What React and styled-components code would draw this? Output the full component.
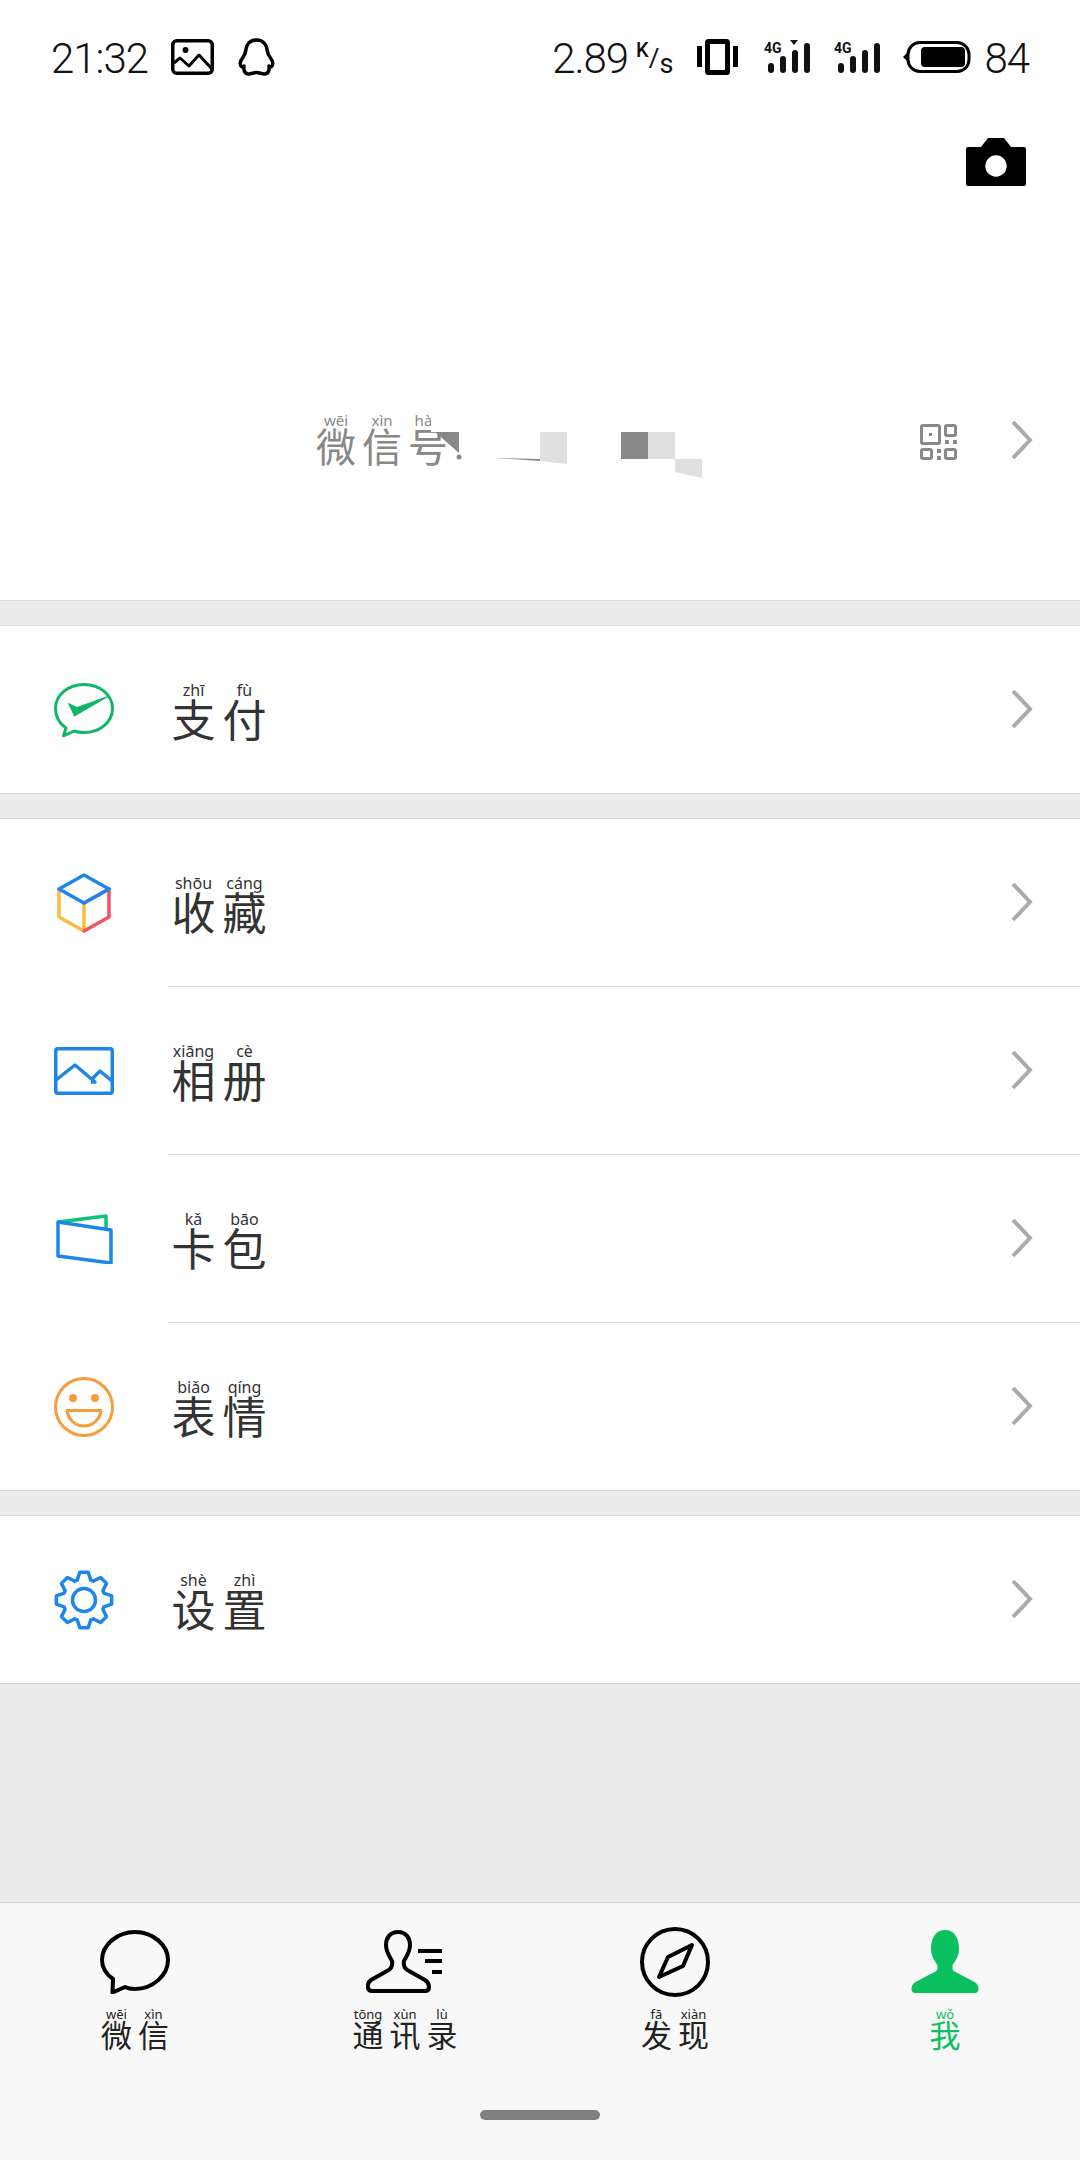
import React from 'react';
import styled, { createGlobalStyle } from 'styled-components';

const GlobalStyle = createGlobalStyle`
  html, body {
    margin: 0;
    padding: 0;
    background: #ececec;
    font-family: "Noto Sans", "Noto Sans CJK SC", sans-serif;
  }
`;

const Page = styled.div`
  width: 1080px;
  height: 2160px;
  display: flex;
  flex-direction: column;
  background: #ececec;
  overflow: hidden;
`;

const Header = styled.header`
  height: 600px;
  flex: none;
  background: #fff;
  border-bottom: 1px solid #d8d8d8;
  display: flex;
  flex-direction: column;
`;

const StatusBar = styled.div`
  height: 38px;
  margin-top: 38px;
  padding: 0 51px;
  display: flex;
  align-items: center;
  color: #111;
`;

const StatusText = styled.span`
  font-family: Roboto, sans-serif;
  font-weight: 300;
  font-size: 42px;
  line-height: 38px;
  padding-top: 4px;
  letter-spacing: -1px;
  margin-left: ${(p) => p.$ml ?? 0}px;
`;

const StatusIcon = styled.svg`
  flex: none;
  display: block;
  margin-left: ${(p) => p.$ml ?? 0}px;
`;

const Spacer = styled.div`
  flex: 1;
`;

const SpeedUnit = styled.span`
  display: inline-flex;
  height: 38px;
  margin-left: 8px;
  font-family: Roboto, sans-serif;
  color: #111;
`;

const UnitPart = styled.span`
  font-size: ${(p) => p.$size}px;
  font-weight: ${(p) => p.$weight};
  line-height: ${(p) => p.$line}px;
  margin-top: ${(p) => p.$top}px;
`;

const CameraRow = styled.div`
  display: flex;
  justify-content: flex-end;
  padding: 62px 54px 0 0;
`;

const ProfileRow = styled.div`
  position: relative;
  display: flex;
  align-items: flex-start;
  margin-top: 234px;
  padding: 0 47px 0 313px;
`;

const Mosaic = styled.svg`
  position: absolute;
  left: 430px;
  top: -10px;
`;

const Word = styled.div`
  display: flex;
  margin-top: ${(p) => p.$top ?? 0}px;
`;

const Syllable = styled.div`
  width: ${(p) => p.$cell}px;
  display: flex;
  flex-direction: column;
  align-items: center;
  color: ${(p) => p.$color};
`;

const Pinyin = styled.span`
  font-family: "Noto Sans", sans-serif;
  font-size: ${(p) => p.$size}px;
  line-height: ${(p) => p.$size + 2}px;
  white-space: nowrap;
`;

const Hanzi = styled.span`
  font-family: "Noto Sans CJK SC", sans-serif;
  font-size: ${(p) => p.$size}px;
  line-height: ${(p) => p.$line}px;
`;

const QrIcon = styled.svg`
  flex: none;
  margin: 4px 54px 0 0;
`;

const Chevron = styled.svg`
  flex: none;
  display: block;
`;

const Group = styled.section`
  flex: none;
  margin-top: 24px;
  background: #fff;
  border-top: 1px solid #d8d8d8;
  border-bottom: 1px solid #d8d8d8;
`;

const Row = styled.div`
  height: ${(p) => (p.$last ? 167 : 168)}px;
  display: flex;
  padding-left: 54px;
`;

const RowIcon = styled.div`
  width: 60px;
  flex: none;
  margin-right: 54px;
  display: flex;
  align-items: center;
  justify-content: center;
`;

const RowBody = styled.div`
  flex: 1;
  display: flex;
  align-items: center;
  justify-content: space-between;
  padding: 0 47px 2px 0;
  border-bottom: ${(p) => (p.$last ? 'none' : '1px solid #dcdcdc')};
`;

const TabBar = styled.nav`
  margin-top: auto;
  height: 257px;
  flex: none;
  background: #f8f8f8;
  border-top: 1px solid #d8d8d8;
  display: flex;
  flex-direction: column;
  align-items: center;
`;

const Tabs = styled.div`
  width: 100%;
  padding-top: 23px;
  display: grid;
  grid-template-columns: repeat(4, 1fr);
`;

const Tab = styled.div`
  display: flex;
  flex-direction: column;
  align-items: center;
`;

const TabIcon = styled.div`
  height: 71px;
  margin-bottom: 10px;
  display: flex;
  align-items: center;
  justify-content: center;
`;

const HomeHandle = styled.div`
  width: 120px;
  height: 10px;
  margin-top: auto;
  margin-bottom: 40px;
  border-radius: 5px;
  background: #808080;
`;

const PinyinWord = ({ items, cell, py, han, line, color, top }) => (
  <Word $top={top}>
    {items.map(([p, h]) => (
      <Syllable key={h} $cell={cell} $color={color}>
        <Pinyin $size={py}>{p}</Pinyin>
        <Hanzi $size={han} $line={line}>{h}</Hanzi>
      </Syllable>
    ))}
  </Word>
);

const ChevronIcon = () => (
  <Chevron width="22" height="40" viewBox="0 0 22 40" fill="none" stroke="#aaa" strokeWidth="4">
    <path d="M2 2l17 18L2 38" />
  </Chevron>
);

const SignalIcon = ({ arrow, ml }) => (
  <StatusIcon $ml={ml} width="48" height="36" viewBox="0 0 48 36" fill="#111">
    <text x="1" y="14" fontFamily="Roboto, sans-serif" fontWeight="700" fontSize="14">4G</text>
    <rect x="5" y="24" width="6" height="10" rx="3" />
    <rect x="17" y="17" width="6" height="17" rx="3" />
    <rect x="29" y="11" width="6" height="23" rx="3" />
    <rect x="41" y="4" width="6" height="30" rx="3" />
    {arrow && <path d="M27 1h8l-4 5z" />}
  </StatusIcon>
);

const gearPath = () => {
  const pts = [];
  const outer = 28;
  const inner = 21;
  for (let i = 0; i < 8; i++) {
    const a = (i * Math.PI) / 4 - Math.PI / 2;
    [
      [inner, -0.33],
      [outer, -0.15],
      [outer, 0.15],
      [inner, 0.33],
    ].forEach(([r, d]) => {
      pts.push(`${(30 + r * Math.cos(a + d)).toFixed(2)} ${(30 + r * Math.sin(a + d)).toFixed(2)}`);
    });
  }
  return `M${pts.join('L')}Z`;
};

const PayIcon = () => (
  <svg width="60" height="54" viewBox="0 0 60 54" fill="none">
    <path
      d="M12 45C5.500 40.500 1.500 33.500 1.500 25.500C1.500 12 14 1.500 30 1.500S58.500 12 58.500 25.500 46 49.500 30 49.500C26.500 49.500 23 49 20 48L9.500 53Z"
      stroke="#0fb665"
      strokeWidth="3"
      strokeLinejoin="round"
    />
    <path d="M14.500 20.500l8.500 4L54 13.500 20.500 33z" fill="#0fb665" stroke="#0fb665" strokeWidth="1" strokeLinejoin="round" />
  </svg>
);

const CubeIcon = () => (
  <svg width="54" height="60" viewBox="0 0 54 60" fill="none" strokeWidth="3.500" strokeLinejoin="round" strokeLinecap="round">
    <path d="M2 16v28l25 14V30" stroke="#fbbb3c" />
    <path d="M52 16v28L27 58" stroke="#ee5560" />
    <path d="M27 30l25-14" stroke="#ee5560" />
    <path d="M27 2l25 14-25 14L2 16z" stroke="#1e86e8" />
  </svg>
);

const AlbumIcon = () => (
  <svg width="60" height="48" viewBox="0 0 60 48" fill="none" stroke="#1e86e8" strokeWidth="3.500" strokeLinejoin="round">
    <rect x="1.750" y="1.750" width="56.500" height="44.500" rx="2" />
    <path d="M2 33l19-15 20 17h-4M37 33l9-9 12 10" />
  </svg>
);

const WalletIcon = () => (
  <svg width="57" height="50" viewBox="0 0 57 50" fill="none" strokeWidth="3.500" strokeLinejoin="round">
    <path d="M2 8l48-6v12" stroke="#0fc27a" />
    <path d="M2 8l53 8v33L2 42z" stroke="#1e86e8" />
  </svg>
);

const SmileIcon = () => (
  <svg width="60" height="60" viewBox="0 0 60 60" fill="none" stroke="#f59e3f" strokeWidth="3">
    <circle cx="30" cy="30" r="28.500" />
    <circle cx="19" cy="21" r="4" fill="#f59e3f" stroke="none" />
    <circle cx="41" cy="21" r="4" fill="#f59e3f" stroke="none" />
    <path d="M13 33.500h34c-1 9.500-9 15.500-17 15.500s-16-6-17-15.500z" strokeLinejoin="round" />
  </svg>
);

const GearIcon = () => (
  <svg width="60" height="60" viewBox="0 0 60 60" fill="none" stroke="#1e86e8" strokeWidth="3.500" strokeLinejoin="round">
    <path d={gearPath()} />
    <circle cx="30" cy="30" r="11.500" />
  </svg>
);

const rows = [
  [{ icon: <PayIcon />, word: [['zhī', '支'], ['fù', '付']] }],
  [
    { icon: <CubeIcon />, word: [['shōu', '收'], ['cáng', '藏']] },
    { icon: <AlbumIcon />, word: [['xiāng', '相'], ['cè', '册']] },
    { icon: <WalletIcon />, word: [['kǎ', '卡'], ['bāo', '包']] },
    { icon: <SmileIcon />, word: [['biǎo', '表'], ['qíng', '情']] },
  ],
  [{ icon: <GearIcon />, word: [['shè', '设'], ['zhì', '置']] }],
];

const tabs = [
  {
    word: [['wēi', '微'], ['xìn', '信']],
    icon: (
      <svg width="70" height="64" viewBox="0 0 70 64" fill="none" stroke="#000" strokeWidth="4" strokeLinejoin="round">
        <path d="M13 49C6 44 2 37 2 30C2 15 17 2 35 2s33 13 33 28-15 29-33 29c-3.500 0-7-.5-10-2l-12.500 5.500z" />
      </svg>
    ),
  },
  {
    word: [['tōng', '通'], ['xùn', '讯'], ['lù', '录']],
    icon: (
      <svg width="78" height="64" viewBox="0 0 78 64" fill="none" stroke="#000" strokeWidth="4">
        <path
          d="M32 2C24 2 20 8 20 15c0 7 4 12 6 16 1 5-1 8-5 10L5 50c-3 2-3.500 5-3 8 .5 2 2 3 4 3h53c3 0 4-2 4-4 0-3-1-5-4-7L43 41c-4-2-6-5-5-10 2-4 6-9 6-16C44 8 40 2 32 2z"
          strokeLinejoin="round"
        />
        <path d="M52 21h24M59 31h17M66 42h10" />
      </svg>
    ),
  },
  {
    word: [['fā', '发'], ['xiàn', '现']],
    icon: (
      <svg width="70" height="70" viewBox="0 0 70 70" fill="none" stroke="#000" strokeWidth="4" strokeLinejoin="round">
        <circle cx="35" cy="35" r="33" />
        <path d="M52 18L28 30l-9 20 24-11z" />
      </svg>
    ),
  },
  {
    active: true,
    word: [['wǒ', '我']],
    icon: (
      <svg width="68" height="64" viewBox="0 0 68 64" fill="#0ac05f">
        <path d="M34 0c-9.500 0-14 8-14 19 0 7 3.500 12 6.500 16v3c0 2-1 3-3 4L4.500 52C1.500 54 .5 56 .5 59c0 2.500 1.500 4 4 4h59c2.500 0 4-1.500 4-4 0-3-1-5-4-7L44.500 42c-2-1-3-2-3-4v-3c3-4 6.500-9 6.500-16C48 8 43.500 0 34 0z" />
      </svg>
    ),
  },
];

const App = () => {
  return (
    <Page>
      <GlobalStyle />
      <Header>
        <StatusBar>
          <StatusText>21:32</StatusText>
          <StatusIcon $ml={23} width="43" height="36" viewBox="0 0 43 36" fill="none" stroke="#000" strokeWidth="3.500" strokeLinejoin="round">
            <rect x="1.750" y="1.750" width="39.500" height="32.500" rx="4" />
            <circle cx="14.500" cy="11" r="3" fill="#000" stroke="none" />
            <path d="M3 24l6-5 9 8 10-11 13 14" strokeWidth="3" />
          </StatusIcon>
          <StatusIcon $ml={24} width="37" height="38" viewBox="0 0 37 38" fill="none" stroke="#000" strokeWidth="3.500" strokeLinejoin="round">
            <path d="M18.500 2C11.500 2 8 7.500 7.500 13.500 7.300 16 6.500 17.500 4.500 20 2 23 1.500 27 3.500 28.500c1.500.5 1.500 0 2.500-.5-.5 3 0 7.500 4 8 3 .3 5.500-1.500 8.500-1.500s5.500 1.800 8.500 1.500c4-.5 4.500-5 4-8 1 .5 1 1 2.500.5 2-1.500 1.500-5.500-1-8.500-2-2.500-2.800-4-3-6.500C29 7.500 25.500 2 18.500 2z" />
          </StatusIcon>
          <Spacer />
          <StatusText>2.89</StatusText>
          <SpeedUnit>
            <UnitPart $size={20} $weight={500} $line={20} $top={2}>K</UnitPart>
            <UnitPart $size={26} $weight={400} $line={26} $top={7}>/</UnitPart>
            <UnitPart $size={27} $weight={400} $line={27} $top={13}>s</UnitPart>
          </SpeedUnit>
          <StatusIcon $ml={24} width="41" height="36" viewBox="0 0 41 36" fill="#000">
            <rect x="0" y="7" width="5" height="21" />
            <rect x="36" y="7" width="5" height="21" />
            <rect x="10.500" y="2.500" width="20" height="31" rx="1" fill="none" stroke="#000" strokeWidth="5" />
          </StatusIcon>
          <SignalIcon arrow ml={25} />
          <SignalIcon ml={22} />
          <StatusIcon $ml={22} width="68" height="32" viewBox="0 0 68 32" fill="none">
            <path d="M0 16l6-6v12z" fill="#000" />
            <rect x="5" y="1.500" width="61" height="29" rx="12" stroke="#000" strokeWidth="3" />
            <rect x="18" y="6" width="44" height="20" rx="4" fill="#000" />
          </StatusIcon>
          <StatusText $ml={13}>84</StatusText>
        </StatusBar>
        <CameraRow>
          <svg width="60" height="48" viewBox="0 0 60 48">
            <path d="M22 0h16l7 9h13a2 2 0 0 1 2 2v35a2 2 0 0 1-2 2H2a2 2 0 0 1-2-2V11a2 2 0 0 1 2-2h13z" fill="#000" />
            <circle cx="30" cy="28" r="10.700" fill="#fff" />
          </svg>
        </CameraRow>
        <ProfileRow>
          <PinyinWord items={[['wēi', '微'], ['xìn', '信'], ['hào', '号']]} cell={46} py={15} han={40} line={32} color="#888" top={-8} />
          <Mosaic width="280" height="75" viewBox="430 410 280 75">
            <rect x="431" y="410" width="29" height="22" fill="#fff" />
            <path d="M435 432h24v21z" fill="#888" />
            <circle cx="459" cy="457" r="2.500" fill="#888" />
            <path d="M495 458l45 1v2z" fill="#888" />
            <path d="M540 432h27v32l-27-3z" fill="#e0e0e0" />
            <rect x="621" y="432" width="27" height="27" fill="#888" />
            <rect x="648" y="432" width="27" height="27" fill="#e0e0e0" />
            <path d="M675 459h27v19l-27-6z" fill="#e0e0e0" />
          </Mosaic>
          <Spacer />
          <QrIcon width="37" height="36" viewBox="0 0 37 36" fill="none" stroke="#888" strokeWidth="3">
            <rect x="1.500" y="1.500" width="18" height="18" rx="1.500" />
            <rect x="9" y="9" width="3" height="3" fill="#888" stroke="none" />
            <rect x="25.500" y="1.500" width="10" height="10" rx="1.500" />
            <rect x="1.500" y="25.500" width="10" height="9" rx="1.500" />
            <rect x="25.500" y="25.500" width="10" height="9" rx="1.500" />
            <rect x="25" y="16" width="4" height="4" fill="#888" stroke="none" />
            <rect x="33" y="16" width="4" height="4" fill="#888" stroke="none" />
            <rect x="17" y="25" width="4" height="4" fill="#888" stroke="none" />
            <rect x="17" y="32" width="4" height="4" fill="#888" stroke="none" />
          </QrIcon>
          <ChevronIcon />
        </ProfileRow>
      </Header>

      {rows.map((group, g) => (
        <Group key={g}>
          {group.map((row, i) => {
            const last = i === group.length - 1;
            return (
              <Row key={row.word[0][1]} $last={last}>
                <RowIcon>{row.icon}</RowIcon>
                <RowBody $last={last}>
                  <PinyinWord items={row.word} cell={51} py={16} han={44} line={38} color="#333" top={0} />
                  <ChevronIcon />
                </RowBody>
              </Row>
            );
          })}
        </Group>
      ))}

      <TabBar>
        <Tabs>
          {tabs.map((tab) => (
            <Tab key={tab.word[0][1]}>
              <TabIcon>{tab.icon}</TabIcon>
              <PinyinWord items={tab.word} cell={37} py={13} han={31} line={24} color={tab.active ? '#0ac05f' : '#222'} />
            </Tab>
          ))}
        </Tabs>
        <HomeHandle />
      </TabBar>
    </Page>
  );
};

export default App;
